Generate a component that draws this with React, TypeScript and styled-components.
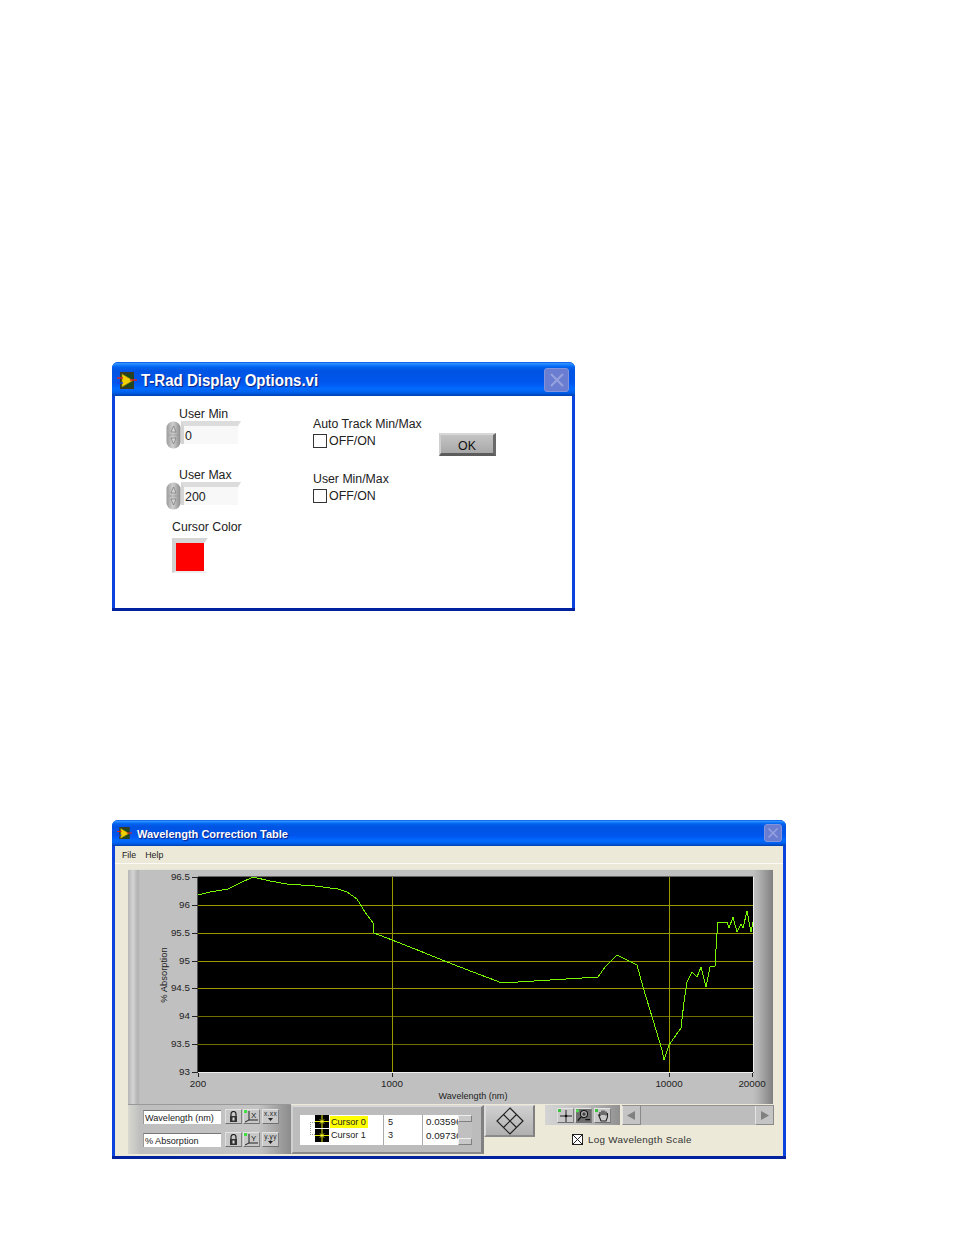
import { FC } from 'react'
import styled, { createGlobalStyle } from 'styled-components'

const GlobalStyle = createGlobalStyle`
  html, body { margin: 0; padding: 0; background: #fff; }
  body { font-family: "Liberation Sans", Arial, sans-serif; color: #222; }
`

const Page = styled.div`
  width: 954px;
  height: 1235px;
  box-sizing: border-box;
  padding: 362px 0 0 112px;
  overflow: hidden;
`

// xp luna window
const Window = styled.div<{ $w: number; $h: number; $mt?: number }>`
  width: ${p => p.$w}px;
  height: ${p => p.$h}px;
  margin-top: ${p => p.$mt || 0}px;
  box-sizing: border-box;
  display: flex;
  flex-direction: column;
  border-radius: 6px 6px 0 0;
  overflow: hidden;
  background: linear-gradient(180deg, #0a44dc calc(100% - 3px), #00229e calc(100% - 3px));
`

const TitleBar = styled.div<{ $h: number; $pt?: number; $pr: number }>`
  height: ${p => p.$h}px;
  flex: none;
  box-sizing: border-box;
  display: flex;
  align-items: center;
  padding: ${p => p.$pt || 0}px ${p => p.$pr}px 0 5px;
  background: linear-gradient(180deg, #0058ee 0%, #3593ff 5%, #127dff 9%, #0262ee 15%, #0054e3 26%, #0055eb 56%, #005bf5 66%, #026afe 78%, #0062ef 88%, #0052d6 94%, #0040ab 100%);
`

const Title = styled.span<{ $size: number; $scale: number }>`
  display: inline-block;
  padding-top: 2px;
  font-size: ${p => p.$size}px;
  font-weight: bold;
  color: #fff;
  white-space: nowrap;
  text-shadow: 1px 1px 1px #0f1f80;
  transform: scaleX(${p => p.$scale});
  transform-origin: left center;
  flex: 1;
`

const CloseBox = styled.div<{ $w: number; $h: number }>`
  width: ${p => p.$w}px;
  height: ${p => p.$h}px;
  flex: none;
  box-sizing: border-box;
  display: flex;
  align-items: center;
  justify-content: center;
  border: 1px solid #8494dc;
  border-radius: 3px;
  background: #6a7dd0;
`

const ClientArea = styled.div<{ $bg: string }>`
  flex: 1;
  margin: 0 3px 3px;
  background: ${p => p.$bg};
  min-height: 0;
`

/* ---- display options dialog ---- */

const OptionsBody = styled.div`
  display: flex;
  padding: 11px 0 0 51px;
`

const LeftColumn = styled.div`
  width: 147px;
  flex: none;
  display: flex;
  flex-direction: column;
`

const MiddleColumn = styled.div`
  width: 126px;
  flex: none;
  display: flex;
  flex-direction: column;
  padding-top: 10px;
`

const Caption = styled.div<{ $ml?: number; $mt?: number }>`
  font-size: 12.3px;
  line-height: 14px;
  height: 14px;
  margin-left: ${p => p.$ml || 0}px;
  margin-top: ${p => p.$mt || 0}px;
  color: #222;
  white-space: nowrap;
`

const Numeric = styled.div`
  display: flex;
  height: 28px;
`

const NumericInput = styled.div`
  width: 60px;
  height: 23px;
  box-sizing: border-box;
  border-top: 5px solid #dcdcdc;
  border-left: 3px solid #d4d4d4;
  border-right: 3px solid transparent;
  background: #f8f8f8;
  background-clip: padding-box;
  font-size: 12.4px;
  line-height: 20px;
  padding-left: 1px;
  color: #222;
`

const Swatch = styled.div`
  width: 36px;
  height: 35px;
  margin: 4px 0 0 0;
  box-sizing: border-box;
  border-top: 5px solid #d6d6d6;
  border-left: 4px solid #d0d0d0;
  border-right: 4px solid transparent;
  border-bottom: 2px solid #eee;
  background: #fe0000;
  background-clip: padding-box;
`

const SwatchBlock = styled.div`
  display: flex;
  flex-direction: column;
  margin-left: 6px;
`

const CheckRow = styled.div<{ $mb?: number }>`
  display: flex;
  align-items: center;
  gap: 2px;
  height: 15px;
  margin-top: 2px;
  margin-bottom: ${p => p.$mb || 0}px;
  font-size: 12.4px;
  color: #222;
`

const CheckBox = styled.div`
  width: 14px;
  height: 14px;
  box-sizing: border-box;
  border: 1.5px solid #333;
  background: #fff;
`

const OkButton = styled.button`
  width: 57px;
  height: 23px;
  margin-top: 26px;
  padding: 3px 0 0;
  box-sizing: border-box;
  border: 1px solid #555;
  border-top: 2px solid #d8d8d8;
  border-left: 2px solid #cfcfcf;
  border-right: 3px solid #6a6a6a;
  border-bottom: 3px solid #5c5c5c;
  background: linear-gradient(180deg, #c4c4c4, #a8a8a8);
  font: 12.4px "Liberation Sans", Arial, sans-serif;
  color: #111;
`

/* ---- wavelength table ---- */

const MenuBar = styled.div`
  height: 17px;
  display: flex;
  align-items: center;
  gap: 9px;
  padding-left: 7px;
  font-size: 8.8px;
  color: #222;
  border-bottom: 1px solid #fbfaf4;
`

const TableBody = styled.div`
  padding: 5px 9px 0 13px;
`

const PlotPanel = styled.div`
  width: 645px;
  height: 235px;
  background: linear-gradient(90deg, #b6b6b6 0, #d4d4d4 5px, #b0b0b0 10px, #c0c0c0 12px, #c0c0c0 625px, #b4b4b4 630px, #808080 645px);
  border-top: 1px solid #e6e4d8;
  box-sizing: border-box;
  svg { display: block; }
`

const BottomRow = styled.div`
  display: flex;
  align-items: flex-start;
`

const LegendPanel = styled.div`
  width: 163px;
  height: 50px;
  flex: none;
  box-sizing: border-box;
  padding: 4px 0 0 15px;
  display: flex;
  flex-direction: column;
  gap: 8px;
  background: linear-gradient(90deg, #d8d8d0 0, #bebebe 12px, #c4c4c4 130px, #8c8c8c 163px);
  border-top: 1px solid #999;
`

const LegendRow = styled.div`
  display: flex;
  align-items: flex-start;
  height: 15px;
`

const AxisName = styled.div`
  width: 78px;
  height: 14px;
  margin-top: 1px;
  box-sizing: border-box;
  margin-right: 4px;
  padding-left: 1px;
  background: #fff;
  border-top: 1px solid #777;
  border-left: 1px solid #999;
  font-size: 9.1px;
  line-height: 14px;
  color: #222;
  white-space: nowrap;
`

const ToolButton = styled.div<{ $active?: boolean; $mr?: number }>`
  width: 17px;
  height: 15px;
  flex: none;
  margin-right: ${p => p.$mr ?? 1}px;
  box-sizing: border-box;
  display: flex;
  align-items: center;
  justify-content: center;
  background: ${p => (p.$active ? '#6e6e6e' : '#c8c8c8')};
  border-top: 1px solid #e4e4e4;
  border-left: 1px solid #e0e0e0;
  border-right: 1px solid #808080;
  border-bottom: 1px solid #707070;
  svg { display: block; }
`

const CursorPanel = styled.div`
  width: 193px;
  height: 49px;
  margin-top: 1px;
  flex: none;
  box-sizing: border-box;
  padding: 8px 10px 0 7px;
  background: #bcbcbc;
  border-top: 2px solid #d8d8d8;
  border-left: 2px solid #d0d0d0;
  border-right: 3px solid #808080;
  border-bottom: 2px solid #8a8a8a;
  display: flex;
`

const CursorTable = styled.div`
  width: 158px;
  height: 30px;
  flex: none;
  background: #fff;
  display: grid;
  grid-template-columns: 83px 39px 36px;
  grid-template-rows: 13px 14px 3px;
  font-size: 9.1px;
  color: #222;
  overflow: hidden;
`

const CursorName = styled.div`
  position: relative;
  display: flex;
  align-items: center;
  padding-left: 15px;
  gap: 1px;
  white-space: nowrap;
`

const NameLabel = styled.span<{ $selected?: boolean }>`
  width: 38px;
  padding-left: 1px;
  box-sizing: border-box;
  line-height: 12px;
  background: ${p => (p.$selected ? '#ffff00' : 'transparent')};
`

const TreeLine = styled.div`
  position: absolute;
  left: 10px;
  top: 7px;
  width: 5px;
  height: 13px;
  box-sizing: border-box;
  border-left: 1px dotted #999;
  border-top: 1px dotted #999;
  border-bottom: 1px dotted #999;
`

const CursorCell = styled.div<{ $value?: boolean }>`
  display: flex;
  align-items: center;
  padding-left: ${p => (p.$value ? 3 : 4)}px;
  border-left: 1px solid #aaa;
  font-size: ${p => (p.$value ? 9.8 : 9.1)}px;
  white-space: nowrap;
  overflow: hidden;
`

const TableFoot = styled.div`
  grid-column: 1 / 4;
  display: grid;
  grid-template-columns: 83px 39px 36px;
`

const FootCell = styled.div`
  border-left: 1px solid #aaa;
  &:first-child { border-left: 0; }
`

const TinyScroll = styled.div`
  width: 14px;
  height: 30px;
  flex: none;
  display: flex;
  flex-direction: column;
  justify-content: space-between;
  background: #c0c0c0;
`

const TinyScrollButton = styled.div`
  height: 7px;
  box-sizing: border-box;
  background: #c8c8c8;
  border-top: 1px solid #eee;
  border-left: 1px solid #eee;
  border-right: 1px solid #808080;
  border-bottom: 1px solid #808080;
`

const DiamondButton = styled.div`
  width: 51px;
  height: 32px;
  margin-top: 1px;
  flex: none;
  box-sizing: border-box;
  display: flex;
  align-items: center;
  justify-content: center;
  background: linear-gradient(180deg, #d0d0d0, #b0b0b0);
  border-top: 1px solid #ddd;
  border-left: 2px solid #dcdcdc;
  border-right: 2px solid #808080;
  border-bottom: 2px solid #8a8a8a;
`

const RightGroup = styled.div`
  margin: 1px 0 0 10px;
  width: 229px;
  flex: none;
`

const ToolsRow = styled.div`
  display: flex;
  height: 20px;
  gap: 2px;
`

const Palette = styled.div`
  width: 75px;
  height: 20px;
  flex: none;
  box-sizing: border-box;
  padding: 3px 0 0 12px;
  display: flex;
  background: linear-gradient(90deg, #d4d4d4 0, #bdbdbd 40px, #909090 75px);
`

const ScrollTrack = styled.div`
  flex: 1;
  display: flex;
  justify-content: space-between;
  background: #bdbdbd;
  border-top: 1px solid #909090;
`

const ScrollArrow = styled.div`
  width: 19px;
  box-sizing: border-box;
  display: flex;
  align-items: center;
  justify-content: center;
  background: #c4c4c4;
  border-left: 1px solid #e4e4e4;
  border-bottom: 1px solid #8a8a8a;
  border-right: 1px solid #8a8a8a;
`

const LogRow = styled.div`
  display: flex;
  align-items: center;
  gap: 5px;
  margin: 8px 0 0 27px;
  height: 12px;
  font-size: 9.8px;
  letter-spacing: 0.3px;
  color: #333;
  svg { display: block; }
`

/* ---- drawings ---- */

const VILogo: FC<{ size: number }> = ({ size }) => (
  <svg width={size} height={size * 0.85} viewBox="0 0 20 17" style={{ flex: 'none', marginRight: size > 16 ? 4 : 5 }}>
    <rect x="3" y="0" width="14" height="17" fill="#3a3a20" />
    <rect x="4" y="2" width="12" height="13" fill="#1c4a20" />
    <path d="M5 2 L16 8.5 L5 15 Z" fill="#f0d000" stroke="#a08000" strokeWidth=".6" />
    <path d="M0 6 H6 M13 8 H20" stroke="#e02020" strokeWidth="1.4" />
    <path d="M0 11 H6" stroke="#2040e0" strokeWidth="1.4" />
  </svg>
)

const CloseX: FC<{ size: number }> = ({ size }) => (
  <svg width={size} height={size} viewBox="0 0 16 16">
    <path d="M2 2 L14 14 M14 2 L2 14" stroke="#94a1de" strokeWidth="2.2" />
  </svg>
)

const Spinner = () => (
  <svg width="15" height="28" viewBox="0 0 15 28" style={{ flex: 'none' }}>
    <defs>
      <linearGradient id="spin" x1="0" x2="1" y1="0" y2="0">
        <stop offset="0" stopColor="#9c9c9c" />
        <stop offset=".45" stopColor="#cfcfcf" />
        <stop offset="1" stopColor="#8c8c8c" />
      </linearGradient>
    </defs>
    <rect x="0.5" y="0.5" width="14" height="27" rx="6.5" fill="url(#spin)" />
    <path d="M7.5 5 L10 11 H5 Z M7.5 23 L10 17 H5 Z" fill="#d8d8d8" stroke="#777" strokeWidth=".7" />
    <path d="M2 14 H13" stroke="#999" strokeWidth=".7" />
  </svg>
)

const LockIcon = () => (
  <svg width="9" height="11" viewBox="0 0 9 11">
    <path d="M2 5 V3 a2.5 2.5 0 0 1 5 0 V5" fill="none" stroke="#222" strokeWidth="1.2" />
    <rect x="1" y="5" width="7" height="6" fill="#333" />
    <rect x="3.5" y="6.5" width="2" height="3" fill="#ddd" />
  </svg>
)

const AxisIcon: FC<{ letter: string }> = ({ letter }) => (
  <svg width="15" height="13" viewBox="0 0 15 13">
    <rect x="0" y="0" width="3" height="3" fill="#40e040" />
    <path d="M5 1 V10 H14 M1 12 L5 10" fill="none" stroke="#222" strokeWidth="1" />
    <text x="7" y="8" fontSize="8" fontFamily="Liberation Sans" fill="#222">{letter}</text>
  </svg>
)

const FormatIcon: FC<{ text: string }> = ({ text }) => (
  <svg width="15" height="13" viewBox="0 0 15 13">
    <text x="7.5" y="6" fontSize="6.5" textAnchor="middle" letterSpacing=".4" fontFamily="Liberation Sans" fill="#222">{text}</text>
    <path d="M5 8 H10 L7.5 11 Z" fill="#222" />
  </svg>
)

const CursorGlyph = () => (
  <svg width="14" height="13" viewBox="0 0 14 13" style={{ flex: 'none' }}>
    <rect width="14" height="13" fill="#000" />
    <path d="M0 6.5 H14 M7 0 V13" stroke="#e8e800" strokeWidth="1" />
    <path d="M5 4.5 L9 8.5 M9 4.5 L5 8.5" stroke="#ffff40" strokeWidth="1" />
  </svg>
)

const DiamondIcon = () => (
  <svg width="28" height="28" viewBox="0 0 28 28">
    <path d="M14 1 L27 14 L14 27 L1 14 Z M7.5 7.5 L20.5 20.5 M20.5 7.5 L7.5 20.5" fill="none" stroke="#222" strokeWidth="1.2" />
  </svg>
)

const CrossIcon = () => (
  <svg width="15" height="13" viewBox="0 0 15 13">
    <rect width="3" height="3" fill="#40c040" />
    <path d="M8 1 V13 M2 7 H14" stroke="#222" strokeWidth="1" />
    <circle cx="8" cy="7" r="1.3" fill="#111" />
  </svg>
)

const ZoomIcon = () => (
  <svg width="16" height="13" viewBox="0 0 16 13">
    <rect width="3" height="3" fill="#50e050" />
    <circle cx="8.5" cy="5" r="3.8" fill="#aaa" stroke="#111" strokeWidth="1.1" />
    <path d="M8.5 3 V7 M6.5 5 H10.5" stroke="#111" strokeWidth=".9" />
    <path d="M5.5 8 L2 12 M10 11 H15" stroke="#111" strokeWidth="1.3" />
  </svg>
)

const HandIcon = () => (
  <svg width="15" height="13" viewBox="0 0 15 13">
    <rect width="3" height="3" fill="#40c040" />
    <path d="M5 7 V3 M7 6 V1.5 M9 6 V1.5 M11 6.5 V2.5 M5 7 L3.5 5.5 M3.5 5.5 L6 12 H11 L12.5 8 V4" fill="none" stroke="#222" strokeWidth="1.1" />
  </svg>
)

// curve traced from the plot, in page coordinates
const curve = '198,895 210,892 228,889 240,883 253,877 270,881 287,884 315,886 338,889 347,892 357,899 365,912 373,923 374,933 392,940 420,951 447,962 473,972 502,983 550,980 598,977 605,967 617,955 637,965 643,987 653,1020 662,1050 664,1060 669,1045 681,1028 684,1002 687,982 692,972 697,977 701,967 706,987 710,967 715,966 717,933 718,922 727,922 729,928 733,917 737,932 741,924 743,928 747,911 751,932 753,922'

const yTicks: [string, number][] = [['96.5', 877], ['96', 905], ['95.5', 933], ['95', 961], ['94.5', 988], ['94', 1016], ['93.5', 1044], ['93', 1072]]
const xTicks: [string, number][] = [['200', 198], ['1000', 392], ['10000', 669], ['20000', 752]]

const PlotChart = () => (
  <svg width="645" height="234" viewBox="128 870 645 234" fontFamily="Liberation Sans" fontSize="9.8" fill="#222">
    <rect x="198" y="877" width="555" height="195" fill="#000" />
    <path d="M197.5 877 V1072.5 H754" fill="none" stroke="#555" />
    <path d="M198 876.5 H753" stroke="#666" />
    <path d="M198 1072.5 H753 M753.5 877 V1072" stroke="#eee" />
    {yTicks.slice(1, 7).map(([, y]) => (
      <path key={y} d={`M198 ${y}.5 H753`} stroke={y > 1000 ? '#706e00' : '#9a9800'} shapeRendering="crispEdges" />
    ))}
    <path d="M392.5 877 V1072 M669.5 877 V1072" stroke="#9a9800" shapeRendering="crispEdges" />
    <polyline points={curve} fill="none" stroke="#78f800" strokeWidth="1" shapeRendering="crispEdges" />
    {yTicks.map(([label, y]) => (
      <g key={label}>
        <path d={`M192 ${y}.5 H198`} stroke="#222" shapeRendering="crispEdges" />
        <text x="190" y={y + 3} textAnchor="end">{label}</text>
      </g>
    ))}
    {xTicks.map(([label, x]) => (
      <g key={label}>
        <path d={`M${x}.5 1073 V1077`} stroke="#222" shapeRendering="crispEdges" />
        <text x={x} y="1087" textAnchor="middle">{label}</text>
      </g>
    ))}
    <text x="473" y="1099" textAnchor="middle" fontSize="9.1">Wavelength (nm)</text>
    <text transform="translate(167 975) rotate(-90)" textAnchor="middle" fontSize="9.4">% Absorption</text>
  </svg>
)

const App: FC = () => (
  <Page>
    <GlobalStyle />
    <Window $w={463} $h={249}>
      <TitleBar $h={34} $pt={2} $pr={6}>
        <VILogo size={20} />
        <Title $size={16} $scale={0.94}>T-Rad Display Options.vi</Title>
        <CloseBox $w={25} $h={24}><CloseX size={16} /></CloseBox>
      </TitleBar>
      <ClientArea $bg="#fff">
        <OptionsBody>
          <LeftColumn>
            <Caption $ml={13}>User Min</Caption>
            <Numeric>
              <Spinner />
              <NumericInput>0</NumericInput>
            </Numeric>
            <Caption $ml={13} $mt={19}>User Max</Caption>
            <Numeric>
              <Spinner />
              <NumericInput>200</NumericInput>
            </Numeric>
            <SwatchBlock>
              <Caption $mt={10}>Cursor Color</Caption>
              <Swatch />
            </SwatchBlock>
          </LeftColumn>
          <MiddleColumn>
            <Caption>Auto Track Min/Max</Caption>
            <CheckRow $mb={24}><CheckBox />OFF/ON</CheckRow>
            <Caption>User Min/Max</Caption>
            <CheckRow><CheckBox />OFF/ON</CheckRow>
          </MiddleColumn>
          <OkButton>OK</OkButton>
        </OptionsBody>
      </ClientArea>
    </Window>

    <Window $w={674} $h={339} $mt={209}>
      <TitleBar $h={26} $pr={4}>
        <VILogo size={15} />
        <Title $size={11} $scale={1}>Wavelength Correction Table</Title>
        <CloseBox $w={18} $h={18}><CloseX size={12} /></CloseBox>
      </TitleBar>
      <ClientArea $bg="#ece9d8">
        <MenuBar><span>File</span><span>Help</span></MenuBar>
        <TableBody>
          <PlotPanel><PlotChart /></PlotPanel>
          <BottomRow>
            <LegendPanel>
              <LegendRow>
                <AxisName>Wavelength (nm)</AxisName>
                <ToolButton><LockIcon /></ToolButton>
                <ToolButton $mr={2}><AxisIcon letter="X" /></ToolButton>
                <ToolButton><FormatIcon text="x.xx" /></ToolButton>
              </LegendRow>
              <LegendRow>
                <AxisName>% Absorption</AxisName>
                <ToolButton><LockIcon /></ToolButton>
                <ToolButton $mr={2}><AxisIcon letter="Y" /></ToolButton>
                <ToolButton><FormatIcon text="y.yy" /></ToolButton>
              </LegendRow>
            </LegendPanel>
            <CursorPanel>
              <CursorTable>
                <CursorName>
                  <TreeLine />
                  <CursorGlyph />
                  <NameLabel $selected>Cursor 0</NameLabel>
                </CursorName>
                <CursorCell>5</CursorCell>
                <CursorCell $value>0.03596</CursorCell>
                <CursorName>
                  <CursorGlyph />
                  <NameLabel>Cursor 1</NameLabel>
                </CursorName>
                <CursorCell>3</CursorCell>
                <CursorCell $value>0.09736</CursorCell>
                <TableFoot><FootCell /><FootCell /><FootCell /></TableFoot>
              </CursorTable>
              <TinyScroll>
                <TinyScrollButton />
                <TinyScrollButton />
              </TinyScroll>
            </CursorPanel>
            <DiamondButton><DiamondIcon /></DiamondButton>
            <RightGroup>
              <ToolsRow>
                <Palette>
                  <ToolButton><CrossIcon /></ToolButton>
                  <ToolButton $active $mr={2}><ZoomIcon /></ToolButton>
                  <ToolButton><HandIcon /></ToolButton>
                </Palette>
                <ScrollTrack>
                  <ScrollArrow>
                    <svg width="9" height="9" viewBox="0 0 9 9"><path d="M8 0 V9 L0 4.5 Z" fill="#808080" /></svg>
                  </ScrollArrow>
                  <ScrollArrow>
                    <svg width="9" height="9" viewBox="0 0 9 9"><path d="M1 0 V9 L9 4.5 Z" fill="#808080" /></svg>
                  </ScrollArrow>
                </ScrollTrack>
              </ToolsRow>
              <LogRow>
                <svg width="11" height="11" viewBox="0 0 11 11">
                  <rect x=".5" y=".5" width="10" height="10" fill="#fff" stroke="#222" />
                  <path d="M1 1 L10 10 M10 1 L1 10" stroke="#222" />
                </svg>
                Log Wavelength Scale
              </LogRow>
            </RightGroup>
          </BottomRow>
        </TableBody>
      </ClientArea>
    </Window>
  </Page>
)

export default App
